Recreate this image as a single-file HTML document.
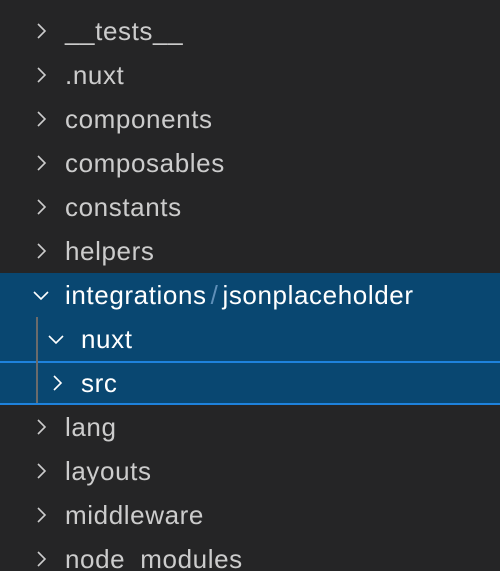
<html><head><style>
body{margin:0;width:500px;height:571px;background:#252526;font-family:"Liberation Sans",sans-serif;overflow:hidden;position:relative}
.r{position:absolute;left:0;width:500px;height:44px;color:#cccccc;font-size:26px;letter-spacing:0.6px;line-height:44px}
.r span{position:absolute;top:0}
.r svg{position:absolute;top:13px}
.sel{background:#094771;color:#fff}
</style></head><body>
<div class="r sel" style="top:273px"></div>
<div class="r sel" style="top:317px"></div>
<div class="r sel" style="top:361px;box-sizing:border-box;border-top:2px solid #1e82dc;border-bottom:2px solid #1e82dc"></div>
<div style="position:absolute;left:36px;top:317px;width:2px;height:86px;background:#6b6b6b"></div>

<div class="r" style="top:9px"><svg width="18" height="18" style="left:32px"><path d="M6 2l7 7-7 7" stroke="#ccc" stroke-width="1.6" fill="none"/></svg><span style="left:65px">__tests__</span></div>
<div class="r" style="top:53px"><svg width="18" height="18" style="left:32px"><path d="M6 2l7 7-7 7" stroke="#ccc" stroke-width="1.6" fill="none"/></svg><span style="left:65px">.nuxt</span></div>
<div class="r" style="top:97px"><svg width="18" height="18" style="left:32px"><path d="M6 2l7 7-7 7" stroke="#ccc" stroke-width="1.6" fill="none"/></svg><span style="left:65px">components</span></div>
<div class="r" style="top:141px"><svg width="18" height="18" style="left:32px"><path d="M6 2l7 7-7 7" stroke="#ccc" stroke-width="1.6" fill="none"/></svg><span style="left:65px">composables</span></div>
<div class="r" style="top:185px"><svg width="18" height="18" style="left:32px"><path d="M6 2l7 7-7 7" stroke="#ccc" stroke-width="1.6" fill="none"/></svg><span style="left:65px">constants</span></div>
<div class="r" style="top:229px"><svg width="18" height="18" style="left:32px"><path d="M6 2l7 7-7 7" stroke="#ccc" stroke-width="1.6" fill="none"/></svg><span style="left:65px">helpers</span></div>
<div class="r" style="top:273px;color:#fff"><svg width="18" height="18" style="left:32px"><path d="M2 6l7 7 7-7" stroke="#fff" stroke-width="1.6" fill="none"/></svg><span style="left:65px">integrations<span style="position:static;color:#5f8fb8;padding:0 4px">/</span>jsonplaceholder</span></div>
<div class="r" style="top:317px;color:#fff"><svg width="18" height="18" style="left:47px"><path d="M2 6l7 7 7-7" stroke="#fff" stroke-width="1.6" fill="none"/></svg><span style="left:81px">nuxt</span></div>
<div class="r" style="top:361px;color:#fff"><svg width="18" height="18" style="left:48px"><path d="M6 2l7 7-7 7" stroke="#fff" stroke-width="1.6" fill="none"/></svg><span style="left:81px">src</span></div>
<div class="r" style="top:405px"><svg width="18" height="18" style="left:32px"><path d="M6 2l7 7-7 7" stroke="#ccc" stroke-width="1.6" fill="none"/></svg><span style="left:65px">lang</span></div>
<div class="r" style="top:449px"><svg width="18" height="18" style="left:32px"><path d="M6 2l7 7-7 7" stroke="#ccc" stroke-width="1.6" fill="none"/></svg><span style="left:65px">layouts</span></div>
<div class="r" style="top:493px"><svg width="18" height="18" style="left:32px"><path d="M6 2l7 7-7 7" stroke="#ccc" stroke-width="1.6" fill="none"/></svg><span style="left:65px">middleware</span></div>
<div class="r" style="top:537px;height:34px;overflow:hidden"><svg width="18" height="18" style="left:32px"><path d="M6 2l7 7-7 7" stroke="#ccc" stroke-width="1.6" fill="none"/></svg><span style="left:65px">node_modules</span></div>
</body></html>
